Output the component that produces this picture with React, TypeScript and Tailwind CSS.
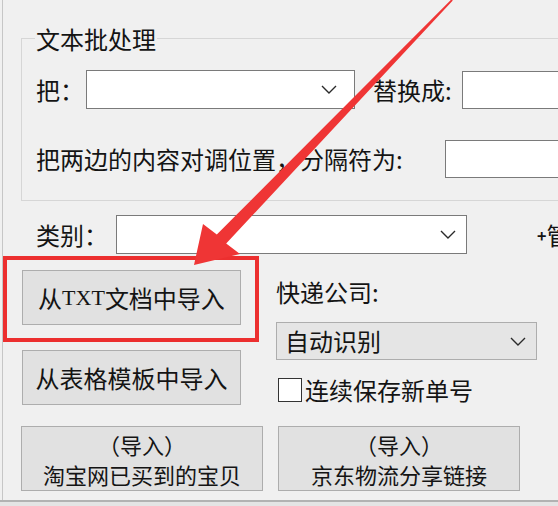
import React from "react";

const Chevron = () => (
  <svg width="16" height="9" viewBox="0 0 16 9" className="shrink-0">
    <polyline points="1,1 8,8 15,1" fill="none" stroke="#2a2a2a" strokeWidth="1.4" />
  </svg>
);

const font = {
  fontFamily: '"Noto Sans CJK SC", "Noto Sans", sans-serif',
};

export default function App() {
  return (
    <div
      className="relative w-[558px] h-[506px] overflow-hidden bg-[#f0f0f0] text-[#141414] text-[24px] leading-[28px]"
      style={font}
    >
      <div className="h-[500px] ml-[2px] border-l border-[#c6c6c6] flex flex-col">
        {/* Group box */}
        <div className="ml-[18px] mt-[38px] w-[620px] h-[163px] border border-[#d6d6d6] flex flex-col shrink-0">
          <div className="-mt-[14px] ml-[13px] px-[1px] w-fit bg-[#f0f0f0] h-[28px]">文本批处理</div>
          <div className="mt-[17px] ml-[14px] flex items-center h-[39px]">
            <div className="w-[50px] shrink-0">把：</div>
            <div className="w-[269px] h-[39px] shrink-0 bg-white border border-[#7a7a7a] flex items-center justify-end pr-[17px]">
              <Chevron />
            </div>
            <div className="ml-[18px] w-[89px] shrink-0">替换成:</div>
            <div className="w-[140px] h-[38px] shrink-0 bg-white border border-[#7a7a7a]" />
          </div>
          <div className="mt-[31px] ml-[14px] flex items-center h-[38px]">
            <div className="w-[409px] shrink-0 whitespace-nowrap">把两边的内容对调位置，分隔符为:</div>
            <div className="w-[140px] h-[38px] shrink-0 bg-white border border-[#7a7a7a]" />
          </div>
        </div>

        {/* 类别 row */}
        <div className="mt-[14px] ml-[33px] flex items-center h-[39px] shrink-0">
          <div className="w-[80px] shrink-0">类别：</div>
          <div className="w-[351px] h-[39px] shrink-0 bg-white border border-[#7a7a7a] flex items-center justify-end pr-[10px]">
            <Chevron />
          </div>
          <div className="ml-[70px] shrink-0 whitespace-nowrap flex items-center">
            <span className="text-[16px] font-bold leading-none">+</span>
            <span>管</span>
          </div>
        </div>

        {/* lower area */}
        <div className="mt-[2px] flex shrink-0">
          <div className="w-[256px] flex flex-col shrink-0">
            <div className="h-[86px] border-[4px] border-[#ec2f2f] pt-[10px] pl-[15px]">
              <div className="w-[219px] h-[55px] bg-[#e1e1e1] border border-[#adadad] flex items-center justify-center whitespace-nowrap">
                从<span className="text-[22px]" style={{ fontFamily: '"Liberation Serif", serif' }}>TXT</span>文档中导入
              </div>
            </div>
            <div className="mt-[8px] ml-[19px] w-[219px] h-[55px] bg-[#e1e1e1] border border-[#adadad] flex items-center justify-center whitespace-nowrap">
              从表格模板中导入
            </div>
          </div>
          <div className="ml-[17px] flex flex-col">
            <div className="mt-[22px] h-[28px] whitespace-nowrap">快递公司:</div>
            <div className="mt-[16px] w-[261px] h-[38px] bg-[#e5e5e5] border border-[#adadad] flex items-center justify-between pl-[8px] pr-[10px]">
              <span>自动识别</span>
              <Chevron />
            </div>
            <div className="mt-[18px] h-[24px] flex items-center whitespace-nowrap">
              <div className="ml-[2px] w-[24px] h-[24px] bg-white border-[1.5px] border-[#333333] shrink-0" />
              <span className="ml-[3px]">连续保存新单号</span>
            </div>
          </div>
        </div>

        {/* bottom buttons */}
        <div className="mt-[21px] ml-[18px] flex shrink-0">
          <div className="w-[242px] h-[65px] bg-[#e1e1e1] border border-[#adadad] flex flex-col items-center justify-center text-[22px] leading-[30px] whitespace-nowrap">
            <span>（导入）</span>
            <span>淘宝网已买到的宝贝</span>
          </div>
          <div className="ml-[15px] w-[242px] h-[65px] bg-[#e1e1e1] border border-[#adadad] flex flex-col items-center justify-center text-[22px] leading-[30px] whitespace-nowrap">
            <span>（导入）</span>
            <span>京东物流分享链接</span>
          </div>
        </div>
      </div>
      <div className="h-[2px] bg-[#b2b2b2]" />
      <div className="h-[4px] bg-[#e4e4e4]" />

      {/* red arrow overlay */}
      <svg
        className="absolute left-0 top-0 pointer-events-none"
        width="558"
        height="506"
        viewBox="0 0 558 506"
      >
        <polygon
          points="451.4,-0.6 452.8,0.6 226.2,243.5 240,254 194,265 203,224 216.8,234.5"
          fill="#ef3535"
        />
      </svg>
    </div>
  );
}
